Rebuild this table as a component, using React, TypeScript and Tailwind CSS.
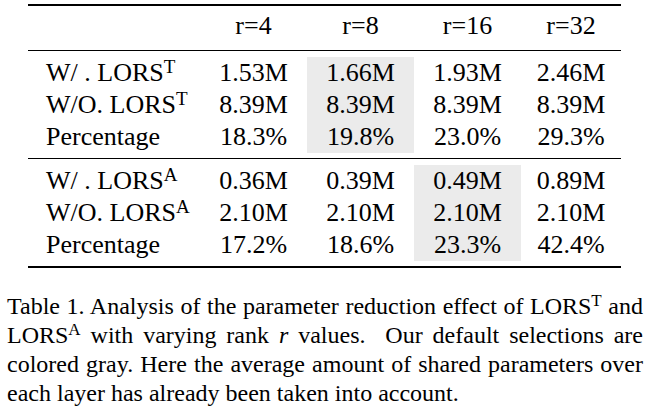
import React from "react";

type Row = { label: React.ReactNode; vals: string[] };

const SupT = ({ c }: { c: string }) => (
  <span className="relative -top-[8px] text-[19px] leading-none">{c}</span>
);
const CapSup = ({ c }: { c: string }) => (
  <span className="relative -top-[8px] text-[17px] leading-none">{c}</span>
);

const sec1: Row[] = [
  { label: <>W/ . LORS<SupT c="T" /></>, vals: ["1.53M", "1.66M", "1.93M", "2.46M"] },
  { label: <>W/O. LORS<SupT c="T" /></>, vals: ["8.39M", "8.39M", "8.39M", "8.39M"] },
  { label: <>Percentage</>, vals: ["18.3%", "19.8%", "23.0%", "29.3%"] },
];
const sec2: Row[] = [
  { label: <>W/ . LORS<SupT c="A" /></>, vals: ["0.36M", "0.39M", "0.49M", "0.89M"] },
  { label: <>W/O. LORS<SupT c="A" /></>, vals: ["2.10M", "2.10M", "2.10M", "2.10M"] },
  { label: <>Percentage</>, vals: ["17.2%", "18.6%", "23.3%", "42.4%"] },
];

const colW = ["w-[107px]", "w-[107px]", "w-[107px]", "w-[100px]"];

function Section({ rows, gray }: { rows: Row[]; gray: number }) {
  return (
    <div className="flex pt-[6px] pb-[5px]">
      <div className="flex w-[172px] flex-col pl-[18px]">
        {rows.map((r, i) => (
          <div key={i} className="h-[32px] whitespace-nowrap">{r.label}</div>
        ))}
      </div>
      {[0, 1, 2, 3].map((c) => (
        <div key={c} className={`${colW[c]} flex flex-col ${c === gray ? "bg-[#ebebeb]" : ""}`}>
          {rows.map((r, i) => (
            <div key={i} className="h-[32px] text-center">{r.vals[c]}</div>
          ))}
        </div>
      ))}
    </div>
  );
}

export default function App() {
  return (
    <div className="w-[650px] h-[415px] bg-white text-black overflow-hidden font-['Liberation_Serif','Times_New_Roman',serif]">
      <div className="pt-[4px] pl-[28px] text-[26px] leading-[32px]">
        <div className="w-[593px]">
          <div className="h-[2px] bg-black" />
          <div className="flex pt-[4px] pb-[8px]">
            <div className="w-[172px]" />
            {["r=4", "r=8", "r=16", "r=32"].map((h, c) => (
              <div key={h} className={`${colW[c]} h-[32px] text-center`}>{h}</div>
            ))}
          </div>
          <div className="h-[1px] bg-black" />
          <Section rows={sec1} gray={1} />
          <div className="h-[1px] bg-black" />
          <Section rows={sec2} gray={2} />
          <div className="h-[2px] bg-black" />
        </div>
      </div>
      <div className="ml-[7px] mt-[24px] w-[636px] text-[24px] leading-[29px]">
        <div className="text-justify [text-align-last:justify] whitespace-nowrap">
          Table 1. Analysis of the parameter reduction effect of LORS<CapSup c="T" /> and
        </div>
        <div className="text-justify [text-align-last:justify]">
          LORS<CapSup c="A" /> with varying rank <i>r</i> values.&nbsp; Our default selections are
        </div>
        <div className="text-justify [text-align-last:justify]">
          colored gray. Here the average amount of shared parameters over
        </div>
        <div>each layer has already been taken into account.</div>
      </div>
    </div>
  );
}
